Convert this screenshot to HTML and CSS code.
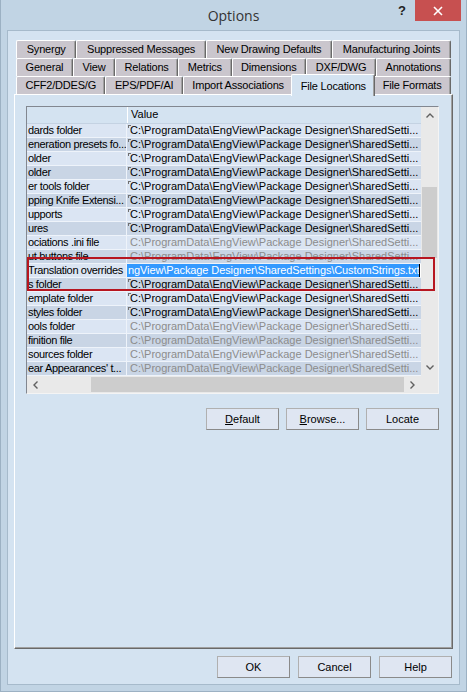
FILE: index.html
```html
<!DOCTYPE html>
<html lang="en">
<head>
    <meta charset="UTF-8">
    <title>Options</title>
    <link rel="stylesheet" href="styles.css">
</head>
<body>
    <div class="window">
        <div class="titlebar">
            <span></span>
            <span class="title">Options</span>
            <div class="caption-btns">
                <span class="help">?</span>
                <span class="close">
                    <svg width="10" height="10" viewBox="0 0 10 10"><path d="M1 1 L9 9 M9 1 L1 9" stroke="#fff" stroke-width="1.6"/></svg>
                </span>
            </div>
        </div>

        <div class="client">
            <!-- tab strip, three rows -->
            <div class="tabs">
                <div class="tab-row">
                    <span class="tab">Synergy</span>
                    <span class="tab">Suppressed Messages</span>
                    <span class="tab">New Drawing Defaults</span>
                    <span class="tab">Manufacturing Joints</span>
                </div>
                <div class="tab-row">
                    <span class="tab">General</span>
                    <span class="tab">View</span>
                    <span class="tab">Relations</span>
                    <span class="tab">Metrics</span>
                    <span class="tab">Dimensions</span>
                    <span class="tab">DXF/DWG</span>
                    <span class="tab">Annotations</span>
                </div>
                <div class="tab-row">
                    <span class="tab">CFF2/DDES/G</span>
                    <span class="tab">EPS/PDF/AI</span>
                    <span class="tab">Import Associations</span>
                    <span class="tab active">File Locations</span>
                    <span class="tab">File Formats</span>
                </div>
            </div>

            <div class="panel">
                <div class="list">
                    <div class="list-main">
                        <div class="list-body">
                            <div class="list-head">
                                <span class="name"></span>
                                <span class="value">Value</span>
                            </div>
                            <div class="row"><span class="name">dards folder</span><span class="value"><i class="mark"></i>C:\ProgramData\EngView\Package Designer\SharedSetti...</span></div>
                            <div class="row alt"><span class="name">eneration presets fo...</span><span class="value"><i class="mark"></i>C:\ProgramData\EngView\Package Designer\SharedSetti...</span></div>
                            <div class="row"><span class="name">older</span><span class="value"><i class="mark"></i>C:\ProgramData\EngView\Package Designer\SharedSetti...</span></div>
                            <div class="row alt"><span class="name">older</span><span class="value"><i class="mark"></i>C:\ProgramData\EngView\Package Designer\SharedSetti...</span></div>
                            <div class="row"><span class="name">er tools folder</span><span class="value"><i class="mark"></i>C:\ProgramData\EngView\Package Designer\SharedSetti...</span></div>
                            <div class="row alt"><span class="name">pping Knife Extensi...</span><span class="value"><i class="mark"></i>C:\ProgramData\EngView\Package Designer\SharedSetti...</span></div>
                            <div class="row"><span class="name">upports</span><span class="value"><i class="mark"></i>C:\ProgramData\EngView\Package Designer\SharedSetti...</span></div>
                            <div class="row alt"><span class="name">ures</span><span class="value"><i class="mark"></i>C:\ProgramData\EngView\Package Designer\SharedSetti...</span></div>
                            <div class="row off"><span class="name">ociations .ini file</span><span class="value">C:\ProgramData\EngView\Package Designer\SharedSetti...</span></div>
                            <div class="row alt off"><span class="name">ut buttons file</span><span class="value">C:\ProgramData\EngView\Package Designer\SharedSetti...</span></div>
                            <div class="row editing"><span class="name">Translation overrides</span><span class="value"><span class="edit"><span class="sel">ngView\Package Designer\SharedSettings\CustomStrings.txt</span><i class="caret"></i></span></span></div>
                            <div class="row alt"><span class="name">s folder</span><span class="value"><i class="mark"></i>C:\ProgramData\EngView\Package Designer\SharedSetti...</span></div>
                            <div class="row"><span class="name">emplate folder</span><span class="value"><i class="mark"></i>C:\ProgramData\EngView\Package Designer\SharedSetti...</span></div>
                            <div class="row alt"><span class="name">styles folder</span><span class="value"><i class="mark"></i>C:\ProgramData\EngView\Package Designer\SharedSetti...</span></div>
                            <div class="row off"><span class="name">ools folder</span><span class="value">C:\ProgramData\EngView\Package Designer\SharedSetti...</span></div>
                            <div class="row alt off"><span class="name">finition file</span><span class="value">C:\ProgramData\EngView\Package Designer\SharedSetti...</span></div>
                            <div class="row off"><span class="name">sources folder</span><span class="value">C:\ProgramData\EngView\Package Designer\SharedSetti...</span></div>
                            <div class="row alt off"><span class="name">ear Appearances' t...</span><span class="value">C:\ProgramData\EngView\Package Designer\SharedSetti...</span></div>
                        </div>
                        <div class="vscroll">
                            <span class="arrow"><svg width="8" height="5" viewBox="0 0 8 5"><path d="M0.5 4.5 L4 1 L7.5 4.5" fill="none" stroke="#606060" stroke-width="1.4"/></svg></span>
                            <div class="track"><div class="thumb"></div></div>
                            <span class="arrow"><svg width="8" height="5" viewBox="0 0 8 5"><path d="M0.5 0.5 L4 4 L7.5 0.5" fill="none" stroke="#606060" stroke-width="1.4"/></svg></span>
                        </div>
                    </div>
                    <div class="hscroll">
                        <span class="arrow"><svg width="5" height="8" viewBox="0 0 5 8"><path d="M4.5 0.5 L1 4 L4.5 7.5" fill="none" stroke="#606060" stroke-width="1.4"/></svg></span>
                        <div class="track"><div class="thumb"></div></div>
                        <span class="arrow"><svg width="5" height="8" viewBox="0 0 5 8"><path d="M0.5 0.5 L4 4 L0.5 7.5" fill="none" stroke="#606060" stroke-width="1.4"/></svg></span>
                        <span class="corner"></span>
                    </div>
                    <!-- marks the row being edited -->
                    <div class="outline"></div>
                </div>

                <div class="panel-buttons">
                    <button class="btn"><u>D</u>efault</button>
                    <button class="btn"><u>B</u>rowse...</button>
                    <button class="btn">Locate</button>
                </div>
            </div>

            <div class="dialog-buttons">
                <button class="btn">OK</button>
                <button class="btn">Cancel</button>
                <button class="btn">Help</button>
            </div>
        </div>
    </div>
</body>
</html>
```

FILE: styles.css
```css
body {
    margin: 0;
    font-family: 'Liberation Sans', Arial, sans-serif;
    font-size: 11px;
    color: #000;
}

.window {
    width: 467px;
    height: 692px;
    box-sizing: border-box;
    background: #c1d4e4;
    border: 1px solid #9cb1c3;
    border-top: none;
    display: flex;
    flex-direction: column;
}

/* Title bar */
.titlebar {
    height: 30px;
    display: grid;
    grid-template-columns: 1fr auto 1fr;
    align-items: center;
}

.title {
    font-family: 'Open Sans', sans-serif;
    font-size: 14px;
    color: #333;
}

.caption-btns {
    justify-self: end;
    align-self: start;
    display: flex;
    margin-right: 5px;
}

.help {
    width: 26px;
    height: 21px;
    line-height: 21px;
    text-align: center;
    font-weight: bold;
    font-size: 13px;
    color: #222;
}

.close {
    width: 46px;
    height: 21px;
    background: #c75050;
    display: flex;
    align-items: center;
    justify-content: center;
}

/* Client area */
.client {
    flex: 1;
    margin: 0 6px 6px;
    border: 1px solid #a6bacb;
    background: #d4e3f1;
    padding: 9px 6px 6px;
    display: flex;
    flex-direction: column;
}

.tabs {
    margin: 0 2px;
}

.tab-row {
    display: flex;
    height: 18px;
}

.tab {
    flex: 1 1 auto;
    box-sizing: border-box;
    height: 18px;
    line-height: 17px;
    text-align: center;
    letter-spacing: -0.2px;
    white-space: nowrap;
    background: #cac6cd;
    border-top: 1px solid #fff;
    border-left: 1px solid #fff;
    border-right: 1px solid #696969;
    box-shadow: inset -1px 0 #a0a0a0;
    border-radius: 2px 2px 0 0;
}

.tab.active {
    position: relative;
    z-index: 1;
    height: 22px;
    line-height: 22px;
    margin: -2px -2px -2px;
    background: #d4e3f1;
}

.panel {
    flex: 1;
    border-top: 1px solid #fff;
    border-left: 1px solid #fff;
    border-right: 1px solid #696969;
    border-bottom: 1px solid #696969;
    box-shadow: inset -1px -1px #a0a0a0;
    padding: 11px;
}

/* List of locations */
.list {
    position: relative;
    width: 413px;
    box-sizing: border-box;
    border: 1px solid #828790;
    border-right-color: #f4f4f4;
    border-bottom-color: #f4f4f4;
}

.list-main {
    display: flex;
}

.list-body {
    width: 394px;
    overflow: hidden;
}

.list-head {
    display: flex;
    height: 17px;
    line-height: 15px;
    box-sizing: border-box;
    border-bottom: 1px solid #c4d2e2;
}

.list-head .name {
    width: 100px;
    border-right: 1px solid #fff;
}

.list-head .value {
    padding-left: 3px;
}

.row {
    display: flex;
    height: 14px;
    box-sizing: border-box;
    line-height: 13px;
    background: #dbe5f3;
    border-bottom: 1px solid #eef3fa;
    white-space: nowrap;
}

.row.alt {
    background: #c9d5e5;
}

.row .name {
    width: 100px;
    padding-left: 1px;
    box-sizing: border-box;
    overflow: hidden;
    letter-spacing: -0.35px;
    border-right: 1px solid #eef3fa;
}

.row .value {
    position: relative;
    flex: 1;
    padding-left: 3px;
    overflow: hidden;
}

.row.off .value {
    color: #8c8c8c;
}

.mark {
    position: absolute;
    left: 1px;
    top: 1px;
    width: 2px;
    height: 2px;
    border-top: 1px solid #707070;
    border-left: 1px solid #707070;
}

.row.editing .value {
    padding-left: 0;
}

.edit {
    display: flex;
    height: 13px;
    background: #fff;
}

.sel {
    background: #3399ff;
    color: #fff;
    padding-left: 1px;
    letter-spacing: -0.1px;
}

.caret {
    width: 1px;
    background: #000;
}

.outline {
    position: absolute;
    left: 0;
    top: 150px;
    width: 408px;
    height: 34px;
    box-sizing: border-box;
    border: 2px solid #b71620;
}

/* Scroll bars */
.vscroll {
    width: 17px;
    display: flex;
    flex-direction: column;
    background: #e9e9e9;
}

.arrow {
    width: 17px;
    height: 17px;
    display: flex;
    align-items: center;
    justify-content: center;
    flex: none;
}

.vscroll .track {
    flex: 1;
}

.vscroll .thumb {
    margin: 63px 1px 0;
    height: 71px;
    background: #cdcdcd;
}

.hscroll {
    display: flex;
    height: 17px;
    background: #e9e9e9;
}

.hscroll .track {
    flex: 1;
    display: flex;
    padding: 1px 0;
}

.hscroll .thumb {
    margin-left: 47px;
    flex: 1;
    background: #cdcdcd;
}

.corner {
    width: 17px;
    background: #e9e9e9;
}

/* Buttons */
.btn {
    width: 73px;
    height: 22px;
    padding: 0;
    font-family: 'Liberation Sans', Arial, sans-serif;
    font-size: 11px;
    color: #000;
    background: #dfe6f2;
    border: 1px solid #8a8a8a;
    border-top-color: #b0b0b0;
    border-left-color: #b0b0b0;
}

.btn u {
    text-decoration: underline;
}

.panel-buttons {
    width: 413px;
    display: flex;
    justify-content: flex-end;
    gap: 7px;
    margin-top: 14px;
}

.dialog-buttons {
    display: flex;
    justify-content: flex-end;
    gap: 8px;
    margin: 7px 1px 0 0;
}
```
